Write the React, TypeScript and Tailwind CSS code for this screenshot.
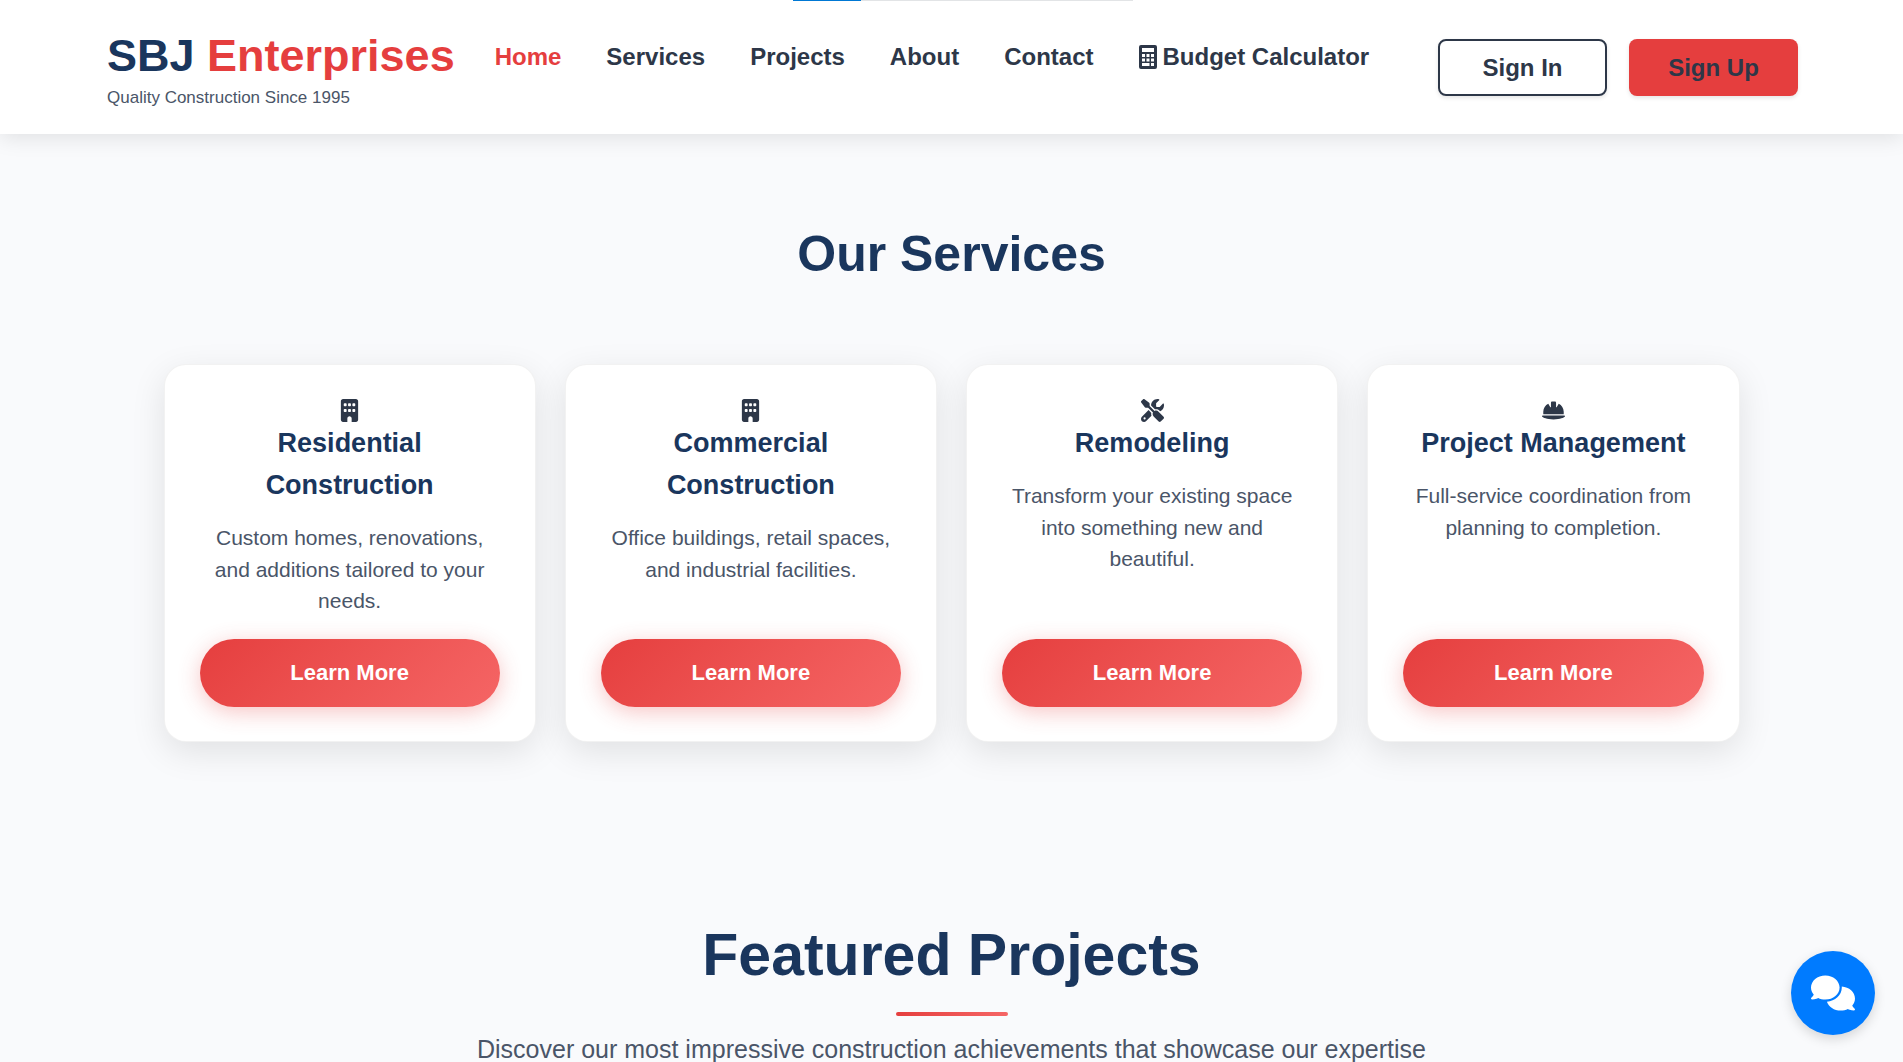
import React from "react";
import {
  FaBuilding,
  FaComments,
  FaHelmetSafety,
  FaScrewdriverWrench,
} from "react-icons/fa6";

const services = [
  {
    title: "Residential Construction",
    text: "Custom homes, renovations, and additions tailored to your needs.",
    Icon: FaBuilding,
  },
  {
    title: "Commercial Construction",
    text: "Office buildings, retail spaces, and industrial facilities.",
    Icon: FaBuilding,
  },
  {
    title: "Remodeling",
    text: "Transform your existing space into something new and beautiful.",
    Icon: FaScrewdriverWrench,
  },
  {
    title: "Project Management",
    text: "Full-service coordination from planning to completion.",
    Icon: FaHelmetSafety,
  },
];

const links = ["Home", "Services", "Projects", "About", "Contact"];

function CalculatorIcon() {
  return (
    <svg viewBox="0 0 18 24" className="h-6 w-[18px]" fill="currentColor" aria-hidden="true">
      <path
        fillRule="evenodd"
        d="M2 0h14a2 2 0 0 1 2 2v20a2 2 0 0 1-2 2H2a2 2 0 0 1-2-2V2a2 2 0 0 1 2-2ZM3 3v4h12V3ZM3 9v3h3V9Zm4.500 0v3h3V9ZM12 9v3h3V9ZM3 13.500v3h3v-3Zm4.500 0v3h3v-3Zm4.500 0v3h3v-3ZM3 18v3h7.500v-3Zm9 0v3h3v-3Z"
      />
    </svg>
  );
}

function Header() {
  return (
    <header className="relative bg-white shadow-[0_4px_20px_rgba(0,0,0,0.1)]">
      <div className="absolute left-[793px] top-0 flex h-px w-[340px] bg-[#e2e4e6]">
        <div className="w-1/5 bg-[#0078d4]" />
      </div>
      <div className="flex items-start pb-6 pl-[107px] pr-[105px] pt-[26px]">
        <div>
          <a href="#" className="block text-[45px] font-bold leading-[60px] text-[#1a365d]">
            SBJ <span className="text-[#e53e3e]">Enterprises</span>
          </a>
          <p className="text-[17px] leading-6 text-[#4a5568]">Quality Construction Since 1995</p>
        </div>
        <nav className="ml-[40px] flex gap-[45px] pt-[13px] text-[24px] font-bold leading-9">
          {links.map((label, i) => (
            <a key={label} href="#" className={i === 0 ? "text-[#e53e3e]" : ""}>
              {label}
            </a>
          ))}
          <a href="#" className="flex items-center gap-[6px]">
            <CalculatorIcon />
            Budget Calculator
          </a>
        </nav>
        <div className="ml-auto flex gap-[22px] pt-[13px] text-[24px] font-bold">
          <button className="h-[57px] w-[169px] rounded-lg border-2 border-[#2d3748] shadow-[0_2px_4px_rgba(0,0,0,0.1)]">
            Sign In
          </button>
          <button className="h-[57px] w-[169px] rounded-lg bg-[#e53e3e] shadow-[0_2px_4px_rgba(0,0,0,0.1)]">
            Sign Up
          </button>
        </div>
      </div>
    </header>
  );
}

export default function App() {
  return (
    <div className="min-h-screen bg-[#f9fafc] font-['Liberation_Sans',Arial,sans-serif] text-[#2d3748]">
      <Header />
      <main>
        <section className="mx-auto max-w-[1576px] pt-[84px]">
          <h2 className="text-center text-[50px] font-bold leading-[72px] text-[#1a365d]">
            Our Services
          </h2>
          <div className="mt-[74px] grid grid-cols-4 gap-[29px]">
            {services.map(({ title, text, Icon }) => (
              <article
                key={title}
                className="flex flex-col items-center rounded-[22px] border border-black/5 bg-white px-[35px] pb-[34px] pt-[34px] text-center shadow-[0_10px_34px_rgba(0,0,0,0.1)]"
              >
                <Icon className="size-[23px]" />
                <h3 className="text-[27px] font-bold leading-[42px] text-[#1a365d]">{title}</h3>
                <p className="mt-4 px-2 text-[21px] leading-normal text-[#4a5568]">{text}</p>
                <div className="mt-auto w-full pt-[22px]">
                  <button className="h-[68px] w-full rounded-full bg-linear-135 from-[#e53e3e] to-[#f56565] text-[22px] font-bold text-white shadow-[0_5px_22px_rgba(229,62,62,0.3)]">
                    Learn More
                  </button>
                </div>
              </article>
            ))}
          </div>
        </section>
        <section className="px-4 pt-[167px] text-center">
          <h2 className="text-[59px] font-bold leading-[92px] text-[#1a365d]">Featured Projects</h2>
          <div className="mx-auto mt-[11px] h-1 w-[112px] rounded-sm bg-linear-to-r from-[#e53e3e] to-[#f56565]" />
          <p className="mt-5 text-[25px] leading-[26px] text-[#4a5568]">
            Discover our most impressive construction achievements that showcase our expertise
          </p>
        </section>
      </main>
      <button
        aria-label="Open chat"
        className="fixed bottom-[27px] right-[28px] flex size-[84px] items-center justify-center rounded-full bg-[#007bff] text-white shadow-[0_4px_12px_rgba(0,0,0,0.15)]"
      >
        <FaComments className="size-[44px]" />
      </button>
    </div>
  );
}
